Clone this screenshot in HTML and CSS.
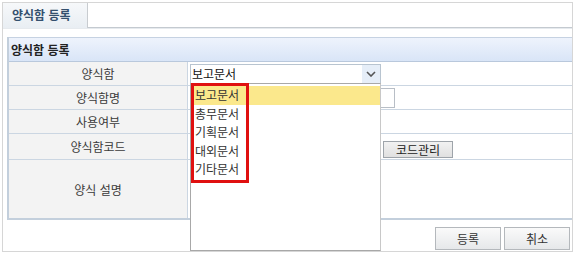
FILE: index.html
```html
<!DOCTYPE html>
<html lang="ko">
<head>
    <meta charset="UTF-8">
    <title>양식함 등록</title>
    <link rel="stylesheet" href="styles.css">
</head>
<body>
    <div class="panel">
        <div class="tab-bar">
            <div class="tab">양식함 등록</div>
        </div>

        <div class="content">
            <div class="form-box">
                <div class="form-title">양식함 등록</div>

                <div class="row row-select">
                    <div class="label">양식함</div>
                    <div class="value">
                        <div class="select">
                            <span>보고문서</span>
                            <span class="select-btn">
                                <svg width="10" height="6" viewBox="0 0 10 6"><path d="M1 1 L5 5 L9 1" fill="none" stroke="#555" stroke-width="1.6"/></svg>
                            </span>
                        </div>
                    </div>
                </div>
                <div class="row">
                    <div class="label">양식함명</div>
                    <div class="value"><div class="text-input"></div></div>
                </div>
                <div class="row">
                    <div class="label">사용여부</div>
                    <div class="value"></div>
                </div>
                <div class="row row-code">
                    <div class="label">양식함코드</div>
                    <div class="value"><button class="code-button">코드관리</button></div>
                </div>
                <div class="row row-desc">
                    <div class="label">양식 설명</div>
                    <div class="value"></div>
                </div>
            </div>

            <div class="button-row">
                <button class="gray-button">등록</button>
                <button class="gray-button">취소</button>
            </div>
        </div>

        <!-- open dropdown of the select -->
        <div class="dropdown">
            <div class="option selected">보고문서</div>
            <div class="option">총무문서</div>
            <div class="option">기획문서</div>
            <div class="option">대외문서</div>
            <div class="option">기타문서</div>
        </div>
        <div class="highlight-box"></div>
    </div>
</body>
</html>
```

FILE: styles.css
```css
body {
    margin: 0;
    padding: 2px;
    background-color: #fff;
    font-family: "Noto Sans CJK KR", "Noto Sans", sans-serif;
    font-size: 12px;
    color: #444;
}

.panel {
    position: relative;
    width: 571px;
    height: 250px;
    box-sizing: border-box;
    border: 1px solid #d6d6d6;
    overflow: hidden;
}

.tab-bar {
    height: 25px;
    box-sizing: border-box;
    border-bottom: 1px solid #c4cad0;
    box-shadow: 0 1px 0 #e6eaee;
    display: flex;
}

.tab {
    width: 85px;
    height: 25px;
    box-sizing: border-box;
    border-right: 1px solid #c8ccd0;
    background: linear-gradient(#f6f8fa, #e9eef3);
    color: #34506e;
    font-weight: bold;
    line-height: 24px;
    padding-left: 9px;
}

.content {
    padding: 9px 0 0 4px;
}

.form-box {
    border-left: 2px solid #c3cfdc;
    border-bottom: 2px solid #c3cfdc;
}

.form-title {
    height: 25px;
    box-sizing: border-box;
    border-top: 1px solid #c6d2e2;
    border-bottom: 1px solid #b9c8dc;
    background: linear-gradient(#eef3fc, #d9e5f7);
    color: #222;
    font-weight: bold;
    line-height: 23px;
    padding-left: 2px;
}

.row {
    display: grid;
    grid-template-columns: 179px 1fr;
    height: 24px;
    box-sizing: border-box;
    border-bottom: 1px solid #cbd6e2;
}

.row:last-child {
    border-bottom: none;
}

.row-code {
    height: 26px;
}

.row-desc {
    height: 58px;
}

.label {
    background-color: #f3f3f3;
    border-right: 1px solid #cbd6e2;
    display: flex;
    align-items: center;
    justify-content: center;
    color: #3a3a3a;
}

.value {
    padding-left: 2px;
    display: flex;
    align-items: center;
}

.select {
    width: 191px;
    height: 20px;
    box-sizing: border-box;
    border: 1px solid #b8c4d0;
    display: flex;
    align-items: center;
    justify-content: space-between;
    color: #111;
    font-size: 12px;
    padding-left: 1px;
}

.select-btn {
    width: 18px;
    height: 18px;
    background-color: #e6eef8;
    display: flex;
    align-items: center;
    justify-content: center;
}

.text-input {
    width: 205px;
    height: 20px;
    box-sizing: border-box;
    border: 1px solid #b8bec6;
}

.row-code .value {
    align-items: flex-end;
    padding-bottom: 1px;
}

.code-button {
    margin-left: 193px;
    width: 70px;
    height: 17px;
    padding: 0;
    border: 1px solid #9ea4aa;
    background: linear-gradient(#f2f2f2, #e0e0e0);
    font-family: "Noto Sans CJK KR", sans-serif;
    font-size: 12px;
    color: #222;
    line-height: 15px;
}

.button-row {
    display: flex;
    justify-content: flex-end;
    gap: 3px;
    padding-right: 2px;
    margin-top: 7px;
}

.gray-button {
    width: 66px;
    height: 23px;
    padding: 0;
    border: 1px solid #b4b8bc;
    background: linear-gradient(#fafafa, #e6e8ea);
    font-family: "Noto Sans CJK KR", sans-serif;
    font-size: 12px;
    color: #333;
}

.dropdown {
    position: absolute;
    left: 187px;
    top: 80px;
    width: 191px;
    height: 168px;
    box-sizing: border-box;
    border: 1px solid #a8a8a8;
    border-right-color: #c8c8c8;
    background-color: #fff;
    padding-top: 2px;
}

.option {
    height: 18.5px;
    line-height: 18px;
    padding-left: 4px;
    color: #333;
    font-size: 12px;
}

.option.selected {
    background-color: #fbe88c;
}

.highlight-box {
    position: absolute;
    left: 188px;
    top: 80px;
    width: 58px;
    height: 100px;
    box-sizing: border-box;
    border: 3px solid #e01010;
}
```
